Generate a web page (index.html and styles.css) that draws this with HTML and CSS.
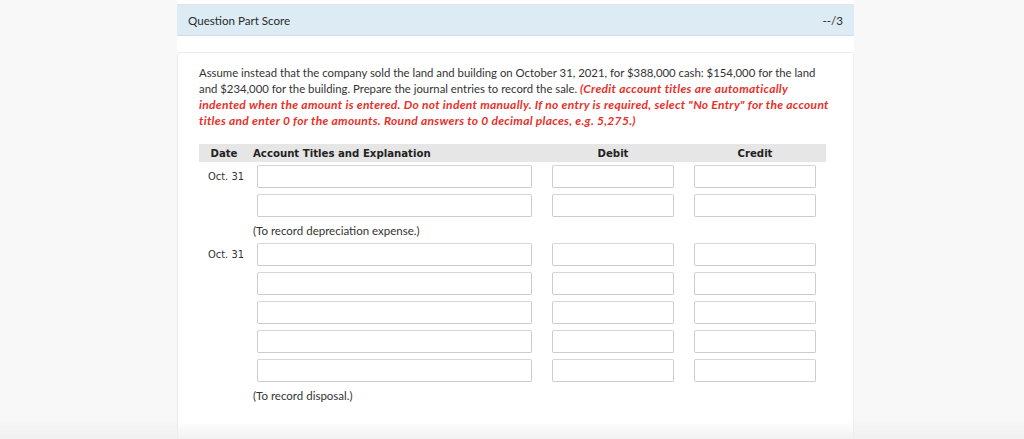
FILE: index.html
```html
<!DOCTYPE html>
<html lang="en">
<head>
<meta charset="utf-8">
<title>Question Part</title>
<link rel="stylesheet" href="styles.css">
</head>
<body>
<div class="wrap">
  <div class="scorebar">
    <span class="score-label">Question Part Score</span>
    <span class="score-value">--/3</span>
  </div>
  <div class="card">
    <p class="prompt">Assume instead that the company sold the land and building on October 31, 2021, for $388,000 cash: $154,000 for the land and $234,000 for the building. Prepare the journal entries to record the sale. <em class="note">(Credit account titles are automatically indented when the amount is entered. Do not indent manually. If no entry is required, select "No Entry" for the account titles and enter 0 for the amounts. Round answers to 0 decimal places, e.g. 5,275.)</em></p>

    <div class="journal">
      <div class="jhead">
        <div class="hdate">Date</div>
        <div class="hacct">Account Titles and Explanation</div>
        <div class="hnum">Debit</div>
        <div class="hnum">Credit</div>
      </div>

      <div class="entry">
        <div class="jrow">
          <div class="date">Oct. 31</div>
          <input class="acct" type="text">
          <input class="num" type="text">
          <input class="num" type="text">
        </div>
        <div class="jrow">
          <div class="date"></div>
          <input class="acct" type="text">
          <input class="num" type="text">
          <input class="num" type="text">
        </div>
        <div class="expl">(To record depreciation expense.)</div>
      </div>

      <div class="entry">
        <div class="jrow">
          <div class="date">Oct. 31</div>
          <input class="acct" type="text">
          <input class="num" type="text">
          <input class="num" type="text">
        </div>
        <div class="jrow">
          <div class="date"></div>
          <input class="acct" type="text">
          <input class="num" type="text">
          <input class="num" type="text">
        </div>
        <div class="jrow">
          <div class="date"></div>
          <input class="acct" type="text">
          <input class="num" type="text">
          <input class="num" type="text">
        </div>
        <div class="jrow">
          <div class="date"></div>
          <input class="acct" type="text">
          <input class="num" type="text">
          <input class="num" type="text">
        </div>
        <div class="jrow">
          <div class="date"></div>
          <input class="acct" type="text">
          <input class="num" type="text">
          <input class="num" type="text">
        </div>
        <div class="expl">(To record disposal.)</div>
      </div>
    </div>
  </div>
</div>
<div class="fade"></div>
</body>
</html>
```

FILE: styles.css
```css
html, body {
  margin: 0;
  padding: 0;
}
body {
  background: #f8f8f8;
  font-family: Lato, "Open Sans", sans-serif;
  color: #333333;
  height: 439px;
  overflow: hidden;
}
.wrap {
  margin-left: 177px;
  width: 677px;
  background: #ffffff;
  padding-top: 4px;
  min-height: 480px;
}
.scorebar {
  display: flex;
  justify-content: space-between;
  align-items: center;
  height: 30px;
  padding: 0 11px 0 11px;
  background: #dcebf4;
  border-top: 1px solid #e3e6e8;
  border-bottom: 1px solid #cfdde6;
  font-size: 11.6px;
  color: #2b2b2b;
}
.card {
  margin-top: 16px;
  border: 1px solid #ececec;
  border-radius: 3px;
  padding: 12px 21px 40px 21px;
  min-height: 400px;
}
.prompt {
  margin: 0;
  max-width: 632px;
  font-size: 11.35px;
  line-height: 16px;
  color: #333333;
}
.note {
  color: #e8302a;
  font-weight: 700;
  font-style: italic;
  font-size: 12px;
  line-height: 16px;
  letter-spacing: 0.3px;
}
.journal {
  margin-top: 15px;
}
.jhead,
.jrow {
  display: grid;
  grid-template-columns: 54px 279px 142px 142px;
  align-items: center;
}
.jhead {
  width: 627px;
  height: 18px;
  background: #e6e6e6;
  font-family: "DejaVu Sans Condensed", "DejaVu Sans", sans-serif;
  font-weight: 700;
  font-size: 11.3px;
  color: #222222;
  margin-bottom: 3px;
}
.hdate {
  text-align: center;
  padding-right: 4px;
}
.hacct {
  text-align: left;
}
.hnum {
  padding-left: 20px;
  text-align: center;
}
.jrow + .jrow {
  margin-top: 6px;
}
.date {
  font-family: "DejaVu Sans Condensed", "DejaVu Sans", sans-serif;
  font-size: 11px;
  color: #333333;
  text-align: center;
}
input {
  box-sizing: border-box;
  height: 23px;
  margin: 0;
  padding: 0 4px;
  border: 1px solid #cccccc;
  border-top-color: #d6d6d6;
  border-radius: 2px;
  background: #ffffff;
  font: inherit;
}
.acct {
  margin-left: 4px;
  width: 275px;
}
.num {
  margin-left: 20px;
  width: 122px;
}
.expl {
  margin: 6px 0 4px 54px;
  font-size: 11.5px;
  line-height: 16px;
  color: #333333;
}
.fade {
  position: fixed;
  left: 0;
  right: 0;
  bottom: 0;
  height: 18px;
  background: linear-gradient(to bottom, rgba(240,240,240,0), rgba(238,238,238,0.8));
  pointer-events: none;
}
```
